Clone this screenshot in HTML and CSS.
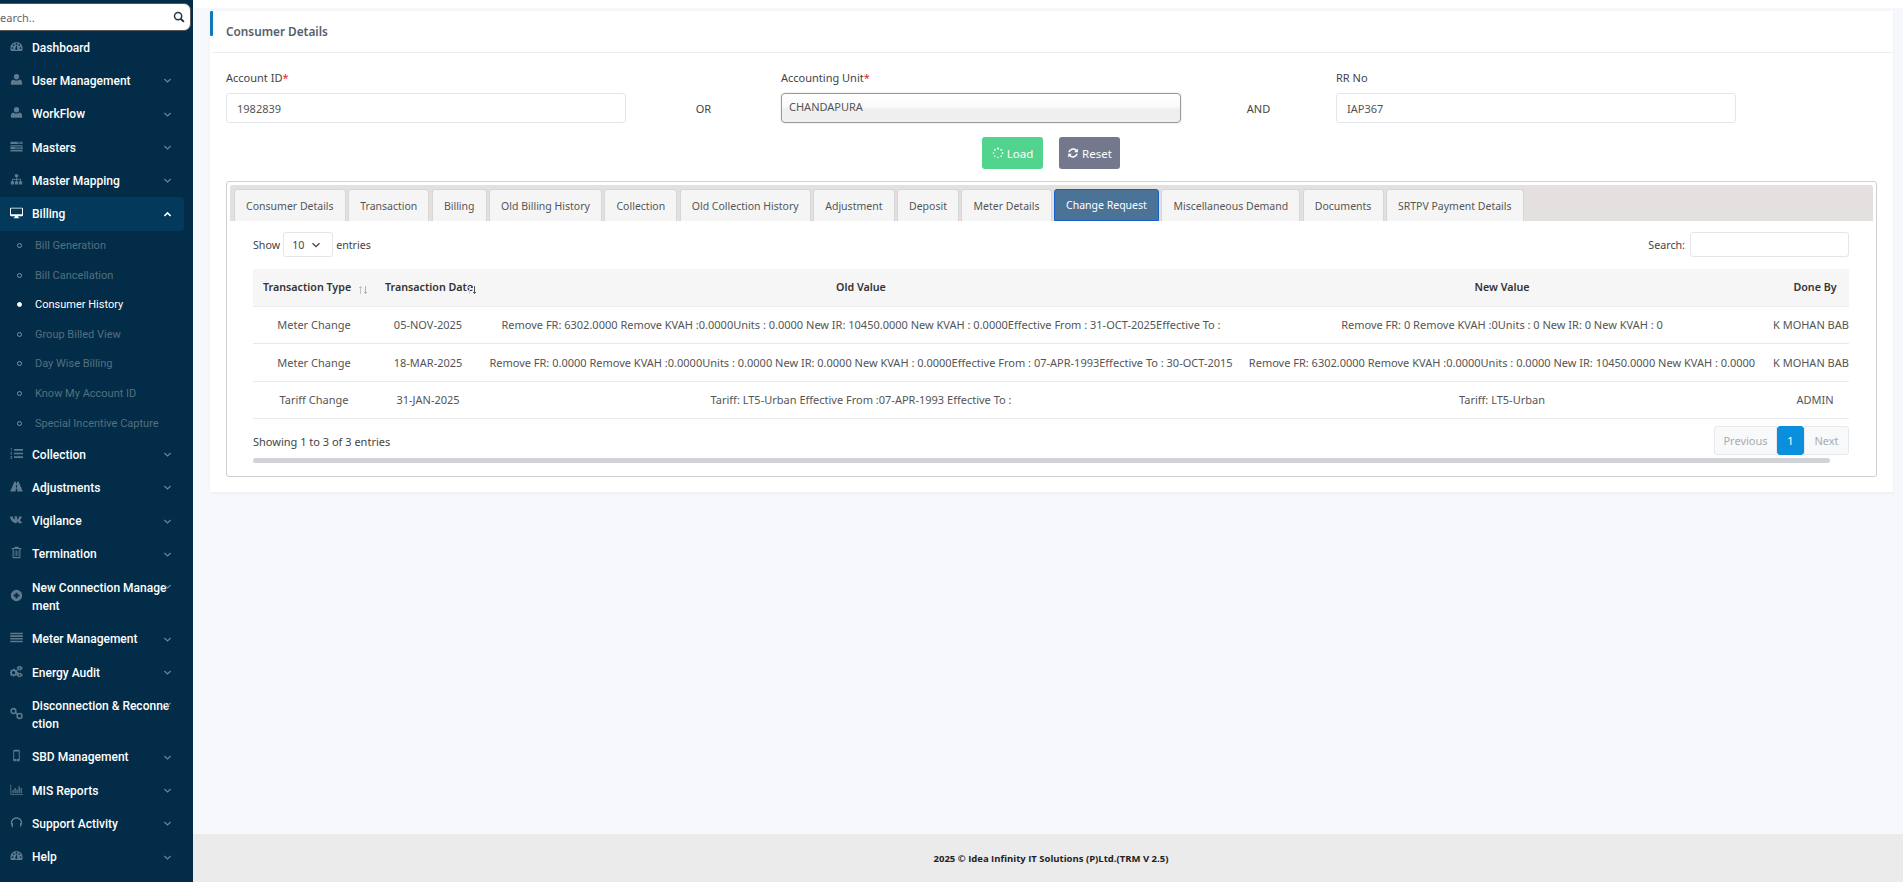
FILE: index.html
```html
<!DOCTYPE html>
<html lang="en">
<head>
<meta charset="utf-8">
<title>Consumer Details</title>
<link rel="stylesheet" href="styles.css">
</head>
<body>
<svg class="sprite" xmlns="http://www.w3.org/2000/svg">
<symbol id="i-gauge" viewBox="0 0 16 16"><path fill-rule="evenodd" d="M8 2.500A7.600 7.600 0 0 0 .4 10c0 1.300.3 2.500.9 3.500h13.400c.6-1 .9-2.200.9-3.500A7.600 7.600 0 0 0 8 2.500zM3 11a1.100 1.100 0 1 1 0-2.200A1.100 1.100 0 0 1 3 11zm1.600-3.600a1.100 1.100 0 1 1 0-2.200 1.100 1.100 0 0 1 0 2.200zM8 5.700a1.100 1.100 0 1 1 0-2.200 1.100 1.100 0 0 1 0 2.200zm1 5.300a1.300 1.300 0 1 1-2.300-1l1-3.300h.6l.5 3.400c.1.300.2.600.2.900zm2.400-3.600a1.100 1.100 0 1 1 0-2.200 1.100 1.100 0 0 1 0 2.200zM13 11a1.100 1.100 0 1 1 0-2.200 1.100 1.100 0 0 1 0 2.200z"/></symbol>
<symbol id="i-user" viewBox="0 0 16 16"><circle cx="8" cy="4.600" r="3.300"/><path d="M2.300 14.500c-.8 0-1.300-.6-1.300-1.400 0-2.500.6-5 3-5.200.8.700 2.400 1.400 4 1.400s3.200-.7 4-1.400c2.400.2 3 2.700 3 5.200 0 .8-.5 1.400-1.300 1.400z"/></symbol>
<symbol id="i-server" viewBox="0 0 16 16"><path d="M.5 2h15v3H.5zM.5 6h15v1H.5zM.5 8h15v3H.5zM.5 12h15v2H.5z"/><path fill="#022c47" d="M9 3h5v1H9zM6 9.200h8v1H6z"/></symbol>
<symbol id="i-sitemap" viewBox="0 0 16 16"><path d="M6 1.500h4v3.500H8.500v2.200h5v3h1.500V14h-4v-3.800h1.500V8.200h-4v2h1.500V14h-4v-3.800h1.500v-2h-4v2H5V14H1v-3.800h1.500v-3h5V5H6z"/></symbol>
<symbol id="i-desktop" viewBox="0 0 16 16"><path fill-rule="evenodd" d="M1 2h14c.6 0 1 .4 1 1v8.500c0 .6-.4 1-1 1H9.800l.4 1.500H11.500v1h-7v-1h1.300l.4-1.500H1c-.6 0-1-.4-1-1V3c0-.6.4-1 1-1zm.2 1.200v6.900h13.600V3.200z"/></symbol>
<symbol id="i-list-ol" viewBox="0 0 16 16"><path d="M5 2.500h11v2H5zM5 7h11v2H5zM5 11.500h11v2H5z"/><path d="M.6 1.500h1.900v3.200H1.700V2.300H.6zM.4 6.500h2.200v.8L1.400 8.600h1.300v.6H.4v-.7L1.600 7.200H.4zM.4 11h2.200v3.800H.4v-.6h1.400v-.9H.9v-.6h.9v-.9H.4z"/></symbol>
<symbol id="i-road" viewBox="0 0 16 16"><path fill-rule="evenodd" d="M5.300 2h2.200v2.500h1V2h2.200L15.800 14H9l-.2-3.200H7.200L7 14H.2zm2.200 4.200l-.2 3h1.400l-.2-3z"/></symbol>
<symbol id="i-vk" viewBox="0 0 18 16"><path d="M.3 4h3c.3 0 .5.200.6.500.6 1.600 1.700 3.400 2.300 3.400.3 0 .4-.2.400-.9V5.100c-.1-.8-.6-.9-.6-1.200 0-.1.200-.3.400-.3h3c.3 0 .5.200.5.600v3.300c0 .3.100.5.300.5.600 0 1.900-2.200 2.300-3.600.1-.3.300-.4.600-.4h3c.5 0 .6.300.5.600-.3 1.200-2.700 4-2.700 4.300 0 .2.100.4.400.7.500.5 2.100 2 2.400 3 .1.400-.1.600-.5.600h-2.800c-.9 0-1.200-.7-2-1.500-.7-.7-1.200-1-1.500-1-.3 0-.4.200-.4.600v1.300c0 .400-.2.600-1 .6-2.600 0-5.300-1.600-7.200-4.800C1.300 7.800.1 5.400.1 4.400c0-.2.100-.4.200-.4z"/></symbol>
<symbol id="i-trash" viewBox="0 0 16 16"><path fill-rule="evenodd" d="M6 1h4l.8 1.500H14v1.300h-1.200v10c0 .7-.5 1.200-1.100 1.200H4.300c-.6 0-1.100-.5-1.100-1.200v-10H2V2.500h3.200zm-1.500 2.800v9.800h7V3.800zM5.800 5.500h.9v6.800h-.9zM7.600 5.500h.9v6.800h-.9zM9.400 5.500h.9v6.800h-.9z"/></symbol>
<symbol id="i-plus" viewBox="0 0 16 16"><path fill-rule="evenodd" d="M8 1a7 7 0 1 0 0 14A7 7 0 0 0 8 1zm1.200 3.500v2.300h2.300v2.400H9.200v2.300H6.800V9.200H4.500V6.800h2.300V4.500z"/></symbol>
<symbol id="i-lines" viewBox="0 0 16 16"><path d="M.3 2h15.400v2H.3zM.3 5.300h15.400v2H.3zM.3 8.600h15.400v2H.3zM.3 11.900h15.400v2H.3z"/></symbol>
<symbol id="i-cogs" viewBox="0 0 16 16"><path fill-rule="evenodd" d="M5 4.500l1 .1.400 1.200 1 .4 1.100-.6.800.8-.6 1.100.4 1 1.200.4v1.200l-1.200.4-.4 1-.6 1.100-.8.800-1.100-.6-1 .4-.4 1.200H3.600l-.4-1.200-1-.4-1.100.6-.8-.8.600-1.100-.4-1L-.6 10V8.800l1.200-.4.4-1-.6-1.100.8-.8 1.100.6 1-.4.400-1.200zM4.400 7.500a2 2 0 1 0 0 4 2 2 0 0 0 0-4zM12.800 1l.8.200.1.800.6.400.8-.2.400.7-.5.600v.7l.5.600-.4.700-.8-.2-.6.400-.1.800-.8.200-.5-.6h-.7l-.5.600-.8-.2-.1-.8-.6-.4-.8.200-.4-.7.500-.6v-.7l-.5-.6.400-.7.800.2.600-.4.100-.8.800-.2.500.6h.7zm-.9 2a1 1 0 1 0 0 2 1 1 0 0 0 0-2zM12.800 9.500l.8.200.1.800.6.400.8-.2.400.7-.5.600v.7l.5.600-.4.700-.8-.2-.6.400-.1.800-.8.200-.5-.6h-.7l-.5.600-.8-.2-.1-.8-.6-.4-.8.200-.4-.7.500-.6v-.7l-.5-.6.400-.7.800.2.600-.4.100-.8.800-.2.500.6h.7zm-.9 2a1 1 0 1 0 0 2 1 1 0 0 0 0-2z"/></symbol>
<symbol id="i-link" viewBox="0 0 16 16"><g fill="none" stroke="currentColor" stroke-width="1.900"><circle cx="4.200" cy="5" r="3"/><circle cx="11.800" cy="11" r="3"/><path d="M6.800 7l2.400 2"/></g></symbol>
<symbol id="i-mobile" viewBox="0 0 16 16"><path fill-rule="evenodd" d="M5.300 1h5.400c.7 0 1.300.6 1.300 1.300v11.400c0 .7-.6 1.300-1.300 1.300H5.300c-.7 0-1.300-.6-1.300-1.300V2.300C4 1.600 4.600 1 5.300 1zm-.1 2.200v9h5.600v-9zM7.300 13v1h1.400v-1z"/></symbol>
<symbol id="i-chart" viewBox="0 0 16 16"><path d="M.5 2h1v11.500h14.500v1H.5z"/><path d="M3 8.500h1.500v4H3zM5.500 6h1.500v6.500H5.500zM8 8h1.500v4.500H8zM10.500 4h1.500v8.500h-1.500zM13 6h1.500v6.500H13z"/></symbol>
<symbol id="i-head" viewBox="0 0 16 16"><path fill-rule="evenodd" d="M8 1.500c3.900 0 7 3 7 6.700 0 1-.2 2-.7 2.800l-.3.500v.5c0 .7-.5 1.300-1.100 1.300h-.6V8.700h1.300c-.2-2.900-2.600-5.400-5.600-5.400S2.600 5.800 2.400 8.700h1.300v5.100h-.6C2.500 13.800 2 13.200 2 12.500V12l-.3-.5C1.200 10.700 1 9.700 1 8.200c0-3.700 3.100-6.700 7-6.700z"/></symbol>
<symbol id="i-down" viewBox="0 0 10 10"><path fill="none" stroke="currentColor" stroke-width="1.300" d="M1.500 3.300L5 6.700l3.500-3.400"/></symbol>
<symbol id="i-up" viewBox="0 0 10 10"><path fill="none" stroke="currentColor" stroke-width="1.800" d="M1.500 6.700L5 3.300l3.500 3.400"/></symbol>
<symbol id="i-search" viewBox="0 0 16 16"><circle cx="6.800" cy="6.800" r="4.800" fill="none" stroke="currentColor" stroke-width="2"/><path fill="none" stroke="currentColor" stroke-width="2.600" d="M10.300 10.300l4.200 4.200"/></symbol>
<symbol id="i-spin" viewBox="0 0 16 16"><circle cx="8" cy="2" r="1.400"/><circle cx="12.300" cy="3.800" r="1.300"/><circle cx="14" cy="8" r="1.200"/><circle cx="12.300" cy="12.200" r="1.100"/><circle cx="8" cy="14" r="1"/><circle cx="3.800" cy="12.200" r="1"/><circle cx="2" cy="8" r="1.100"/><circle cx="3.800" cy="3.800" r="1.200"/></symbol>
<symbol id="i-refresh" viewBox="0 0 16 16"><path d="M14.500 2v5h-5l1.900-1.900A4.600 4.600 0 0 0 3.700 7H1.500a6.800 6.800 0 0 1 11.400-3.400zM1.500 14V9h5l-1.900 1.900A4.600 4.600 0 0 0 12.300 9h2.200a6.800 6.800 0 0 1-11.400 3.400z"/></symbol>
<symbol id="i-sort" viewBox="0 0 10 10"><path fill="none" stroke="#c4c4c4" d="M2.500 9V1.500M1 3l1.500-1.500L4 3"/><path fill="none" stroke="#b0b0b0" d="M7.500 1v7.500M6 7l1.500 1.500L9 7"/></symbol>
<symbol id="i-sort-on" viewBox="0 0 10 10"><path fill="none" stroke="#d0d0d0" d="M2.500 9V1.500M1 3l1.500-1.500L4 3"/><path fill="none" stroke="#555" d="M7.500 1v7.500M6 7l1.500 1.500L9 7"/></symbol>
</svg>

<div class="app">
  <aside class="sidebar">
    <div class="search-box"><span class="search-text">Search..</span><svg class="search-icon"><use href="#i-search"/></svg></div>
    <nav class="menu">
      <a class="item"><svg class="ico"><use href="#i-gauge"/></svg><span class="lbl">Dashboard</span></a>
      <a class="item"><svg class="ico"><use href="#i-user"/></svg><span class="lbl">User Management</span><svg class="chev"><use href="#i-down"/></svg></a>
      <a class="item"><svg class="ico"><use href="#i-user"/></svg><span class="lbl">WorkFlow</span><svg class="chev"><use href="#i-down"/></svg></a>
      <a class="item"><svg class="ico"><use href="#i-server"/></svg><span class="lbl">Masters</span><svg class="chev"><use href="#i-down"/></svg></a>
      <a class="item"><svg class="ico"><use href="#i-sitemap"/></svg><span class="lbl">Master Mapping</span><svg class="chev"><use href="#i-down"/></svg></a>
      <a class="item active"><svg class="ico"><use href="#i-desktop"/></svg><span class="lbl">Billing</span><svg class="chev"><use href="#i-up"/></svg></a>
      <a class="sub"><i class="dot"></i>Bill Generation</a>
      <a class="sub"><i class="dot"></i>Bill Cancellation</a>
      <a class="sub current"><i class="dot"></i>Consumer History</a>
      <a class="sub"><i class="dot"></i>Group Billed View</a>
      <a class="sub"><i class="dot"></i>Day Wise Billing</a>
      <a class="sub"><i class="dot"></i>Know My Account ID</a>
      <a class="sub"><i class="dot"></i>Special Incentive Capture</a>
      <a class="item"><svg class="ico"><use href="#i-list-ol"/></svg><span class="lbl">Collection</span><svg class="chev"><use href="#i-down"/></svg></a>
      <a class="item"><svg class="ico"><use href="#i-road"/></svg><span class="lbl">Adjustments</span><svg class="chev"><use href="#i-down"/></svg></a>
      <a class="item"><svg class="ico"><use href="#i-vk"/></svg><span class="lbl">Vigilance</span><svg class="chev"><use href="#i-down"/></svg></a>
      <a class="item"><svg class="ico"><use href="#i-trash"/></svg><span class="lbl">Termination</span><svg class="chev"><use href="#i-down"/></svg></a>
      <a class="item two"><svg class="ico"><use href="#i-plus"/></svg><span class="lbl">New Connection Manage<br>ment</span><svg class="chev"><use href="#i-down"/></svg></a>
      <a class="item"><svg class="ico"><use href="#i-lines"/></svg><span class="lbl">Meter Management</span><svg class="chev"><use href="#i-down"/></svg></a>
      <a class="item"><svg class="ico"><use href="#i-cogs"/></svg><span class="lbl">Energy Audit</span><svg class="chev"><use href="#i-down"/></svg></a>
      <a class="item two"><svg class="ico"><use href="#i-link"/></svg><span class="lbl">Disconnection &amp; Reconne<br>ction</span><svg class="chev"><use href="#i-down"/></svg></a>
      <a class="item"><svg class="ico"><use href="#i-mobile"/></svg><span class="lbl">SBD Management</span><svg class="chev"><use href="#i-down"/></svg></a>
      <a class="item"><svg class="ico"><use href="#i-chart"/></svg><span class="lbl">MIS Reports</span><svg class="chev"><use href="#i-down"/></svg></a>
      <a class="item"><svg class="ico"><use href="#i-head"/></svg><span class="lbl">Support Activity</span><svg class="chev"><use href="#i-down"/></svg></a>
      <a class="item"><svg class="ico"><use href="#i-gauge"/></svg><span class="lbl">Help</span><svg class="chev"><use href="#i-down"/></svg></a>
    </nav>
  </aside>

  <div class="main">
    <div class="topstrip"></div>
    <div class="content">
      <section class="card">
        <header class="card-head"><h1 class="card-title">Consumer Details</h1></header>
        <div class="card-body">
          <div class="form-row">
            <div class="field"><label class="lab">Account ID<em>*</em></label><div class="input">1982839</div></div>
            <div class="joiner">OR</div>
            <div class="field"><label class="lab">Accounting Unit<em>*</em></label><div class="input blurred">CHANDAPURA</div></div>
            <div class="joiner">AND</div>
            <div class="field"><label class="lab">RR No</label><div class="input">IAP367</div></div>
          </div>
          <div class="actions">
            <button class="btn btn-load"><svg class="btn-ico"><use href="#i-spin"/></svg>Load</button>
            <button class="btn btn-reset"><svg class="btn-ico"><use href="#i-refresh"/></svg>Reset</button>
          </div>
          <div class="tabbox">
            <ul class="tabs">
              <li class="tab">Consumer Details</li>
              <li class="tab">Transaction</li>
              <li class="tab">Billing</li>
              <li class="tab">Old Billing History</li>
              <li class="tab">Collection</li>
              <li class="tab">Old Collection History</li>
              <li class="tab">Adjustment</li>
              <li class="tab">Deposit</li>
              <li class="tab">Meter Details</li>
              <li class="tab selected">Change Request</li>
              <li class="tab">Miscellaneous Demand</li>
              <li class="tab">Documents</li>
              <li class="tab">SRTPV Payment Details</li>
            </ul>
            <div class="panel">
              <div class="dt-top">
                <div class="dt-len">Show <span class="len-select">10<svg class="len-chev"><use href="#i-down"/></svg></span> entries</div>
                <div class="dt-search">Search: <span class="dt-input"></span></div>
              </div>
              <div class="table-clip">
                <table class="dt">
                  <colgroup><col class="c1"><col class="c2"><col class="c3"><col class="c4"><col class="c5"></colgroup>
                  <thead>
                    <tr>
                      <th class="th-sort">Transaction Type<svg class="sort s1"><use href="#i-sort"/></svg></th>
                      <th class="th-sort">Transaction Date<svg class="sort s2"><use href="#i-sort-on"/></svg></th>
                      <th>Old Value</th>
                      <th>New Value</th>
                      <th>Done By</th>
                    </tr>
                  </thead>
                  <tbody>
                    <tr>
                      <td>Meter Change</td><td>05-NOV-2025</td>
                      <td>Remove FR: 6302.0000 Remove KVAH :0.0000Units : 0.0000 New IR: 10450.0000 New KVAH : 0.0000Effective From : 31-OCT-2025Effective To :</td>
                      <td>Remove FR: 0 Remove KVAH :0Units : 0 New IR: 0 New KVAH : 0</td>
                      <td>K MOHAN BABU</td>
                    </tr>
                    <tr>
                      <td>Meter Change</td><td>18-MAR-2025</td>
                      <td>Remove FR: 0.0000 Remove KVAH :0.0000Units : 0.0000 New IR: 0.0000 New KVAH : 0.0000Effective From : 07-APR-1993Effective To : 30-OCT-2015</td>
                      <td>Remove FR: 6302.0000 Remove KVAH :0.0000Units : 0.0000 New IR: 10450.0000 New KVAH : 0.0000</td>
                      <td>K MOHAN BABU</td>
                    </tr>
                    <tr>
                      <td>Tariff Change</td><td>31-JAN-2025</td>
                      <td>Tariff: LT5-Urban Effective From :07-APR-1993 Effective To :</td>
                      <td>Tariff: LT5-Urban</td>
                      <td>ADMIN</td>
                    </tr>
                  </tbody>
                </table>
              </div>
              <div class="dt-bottom">
                <div class="dt-info">Showing 1 to 3 of 3 entries</div>
                <div class="pager"><span class="pg pg-prev">Previous</span><span class="pg pg-on">1</span><span class="pg pg-next">Next</span></div>
              </div>
              <div class="hscroll"></div>
            </div>
          </div>
        </div>
      </section>
    </div>
    <footer class="footer">2025 © Idea Infinity IT Solutions (P)Ltd.(TRM V 2.5)</footer>
  </div>
</div>
</body>
</html>
```
FILE: styles.css
```css
* { box-sizing: border-box; }
html, body { margin: 0; height: 100%; overflow: hidden; }
body { font-family: "Noto Sans", "Open Sans", sans-serif; font-size: 11px; color: #555; background: #f7f8fb; }
.sprite { display: none; }
.app { display: flex; height: 882px; }

.sidebar { width: 193px; flex: none; background: #022c47; padding-top: 3px; overflow: hidden; font-family: Roboto, sans-serif; }
.search-box { width: 199px; height: 28px; margin-left: -8px; background: #fff; border: 1px solid #555; border-radius: 7px; display: flex; align-items: center; justify-content: space-between; padding: 0 5px 0 1px; }
.search-text { font-family: "Noto Sans", sans-serif; font-size: 11px; color: #666; }
.search-icon { width: 12px; height: 12px; color: #22384a; }
.menu { display: flex; flex-direction: column; }
.item { display: flex; align-items: center; height: 33.3px; width: 184px; padding: 0 12px 0 10px; color: #fff; font-size: 12px; font-weight: 500; position: relative; }
.item.two { height: 51.5px; line-height: 18px; }
.item.active { background: #03395b; border-radius: 0 4px 4px 0; }
.ico { width: 13px; height: 13px; flex: none; margin-right: 9px; color: #5d7a8e; fill: #5d7a8e; margin-top: -3px; }
.item.active .ico { color: #fff; fill: #fff; }
.lbl { flex: 1; white-space: nowrap; }
.chev { width: 9px; height: 9px; flex: none; color: #6a8598; margin-left: auto; }
.item.active .chev { color: #fff; }
.item.two .chev { position: absolute; right: 12px; top: 11px; }
.sub { display: flex; align-items: center; height: 29.6px; padding-left: 17px; font-size: 11px; color: #55707f; }
.sub.current { color: #fff; }
.dot { width: 5px; height: 5px; border: 1px solid #7d93a1; border-radius: 50%; margin-right: 13px; flex: none; }
.sub.current .dot { background: #fff; border-color: #fff; }

.main { flex: 1; min-width: 0; display: flex; flex-direction: column; }
.topstrip { height: 8px; background: #fff; flex: none; }
.content { flex: 1; padding: 3px 10px 0 17px; }
.card { background: #fff; border-left: 3px solid transparent; position: relative; box-shadow: 0 1px 3px rgba(0,0,0,.05); }
.card::before { content: ""; position: absolute; left: -3px; top: 0; width: 3px; height: 25px; background: #1279b8; border-radius: 1px; }
.card-head { height: 42px; border-bottom: 1px solid #eceef1; display: flex; align-items: center; padding: 0 0 2px 13px; }
.card-title { margin: 0; font-size: 11.800px; font-weight: 600; color: #56606a; }
.card-body { padding: 16px 16px 15px 13px; }
.form-row { display: flex; }
.field { width: 400px; flex: none; }
.lab { display: block; font-size: 11px; color: #444; line-height: 17px; margin-bottom: 7px; }
.lab em { color: #e02a2a; font-style: normal; }
.input { height: 30px; border: 1px solid #e3e6ea; border-radius: 3px; padding: 0 10px; display: flex; align-items: center; font-size: 11px; color: #555; background: #fff; }
.input.blurred { border: 1px solid #9a9a9a; border-radius: 4px; padding: 0 7px 4px; background: linear-gradient(#fff 0, #fafafa 45%, #efefef 55%, #f0f0f0 100%); box-shadow: 0 0 2px rgba(0,0,0,.2); }
.joiner { width: 155px; flex: none; display: flex; align-items: center; justify-content: center; padding-top: 25px; font-size: 11px; color: #444; }
.actions { display: flex; justify-content: center; gap: 16px; margin: 14px 0 12px -1px; }
.btn { height: 32px; width: 61px; border: 0; border-radius: 3px; color: #fff; font: 11.500px "Noto Sans", sans-serif; display: flex; align-items: center; justify-content: center; gap: 3px; padding: 0; }
.btn-load { background: #52d48f; }
.btn-reset { background: #73788c; }
.btn-ico { width: 12px; height: 12px; fill: #fff; flex: none; }

.tabbox { border: 1px solid #cfcfcf; border-radius: 3px; padding: 3px; height: 296px; }
.tabs { list-style: none; margin: 0; padding: 4px 0 0 4px; display: flex; gap: 2.400px; background: #e3e0df; height: 36px; border-radius: 3px 3px 0 0; }
.tab { height: 32px; border: 1px solid #d6d6d6; border-bottom: 0; border-radius: 3px 3px 0 0; background: #f5f5f5; padding: 0 11.100px; display: flex; align-items: center; font-size: 10.500px; color: #555; white-space: nowrap; }
.tab.selected { background: #4b7297; color: #fff; border: 1px solid #1560c9; }

.panel { padding: 11px 24px 0 23px; }
.dt-top { display: flex; justify-content: space-between; align-items: center; height: 25px; }
.dt-len { font-size: 10.700px; color: #444; display: flex; align-items: center; gap: 3px; }
.len-select { width: 50px; height: 25px; border: 1px solid #e3e6ea; border-radius: 3px; display: flex; align-items: center; justify-content: space-between; padding: 0 11px 0 8px; }
.len-chev { width: 10px; height: 10px; color: #444; }
.dt-search { font-size: 10.700px; color: #444; display: flex; align-items: center; gap: 5px; }
.dt-input { width: 159px; height: 25px; border: 1px solid #e3e6ea; border-radius: 3px; display: block; }

.table-clip { overflow: hidden; margin-top: 12px; }
.dt { border-collapse: collapse; table-layout: fixed; width: 1614px; }
.c1 { width: 122px; } .c2 { width: 106px; } .c3 { width: 760px; } .c4 { width: 522px; } .c5 { width: 104px; }
.dt th { height: 37px; background: #f6f6f6; font-size: 10.700px; font-weight: 600; color: #333; text-align: center; border-bottom: 1px solid #eee; padding: 0; white-space: nowrap; }
.th-sort { position: relative; text-align: left !important; padding-left: 10px !important; }
.sort { position: absolute; top: 16px; width: 10px; height: 10px; }
.s1 { left: 105px; } .s2 { left: 92px; }
.dt td { height: 37.500px; font-size: 11px; color: #555; text-align: center; border-bottom: 1px solid #e9e9e9; white-space: nowrap; padding: 0; }
.dt-bottom { display: flex; justify-content: space-between; align-items: flex-start; height: 36px; padding-top: 7px; }
.dt-info { font-size: 11px; color: #444; margin-top: 8px; }
.pager { display: flex; height: 29px; font-size: 11px; }
.pg { display: flex; align-items: center; justify-content: center; background: #f8f9fa; border: 1px solid #e7e9ec; color: #a5adb5; }
.pg-prev { width: 63px; border-radius: 3px 0 0 3px; }
.pg-on { width: 27px; background: #0a8fdc; border-color: #0a8fdc; color: #fff; border-radius: 3px; }
.pg-next { width: 45px; border-radius: 0 3px 3px 0; }
.hscroll { height: 5px; width: 1577px; margin-top: 3px; background: #d2d3d6; border-radius: 3px; }

.footer { height: 48px; flex: none; background: #ebebeb; display: flex; align-items: center; justify-content: center; padding-left: 6px; font-family: "Open Sans", sans-serif; font-size: 9.500px; font-weight: 700; color: #222; }
```
